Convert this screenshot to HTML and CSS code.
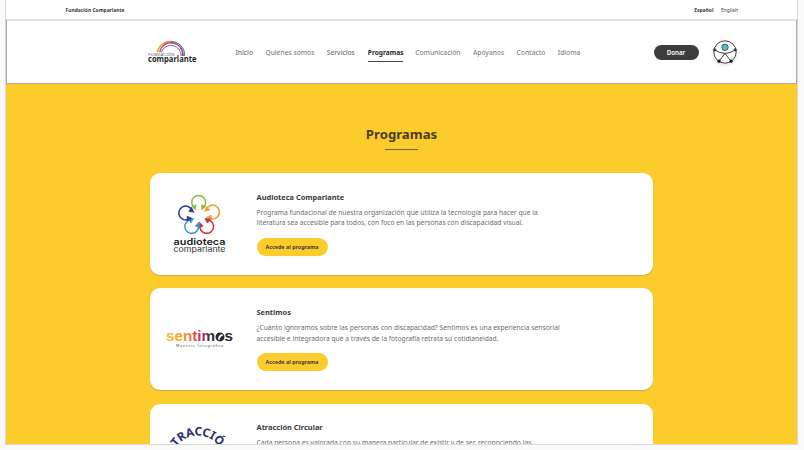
FILE: index.html
```html
<!DOCTYPE html>
<html lang="es">
<head>
<meta charset="utf-8">
<title>Fundación Comparlante</title>
<link rel="stylesheet" href="styles.css">
</head>
<body>
<div class="page">
  <div class="topbar">
    <strong class="org">Fundación Comparlante</strong>
    <div class="langs"><strong>Español</strong><span>English</span></div>
  </div>
  <header class="header">
    <svg class="brand" viewBox="0 0 52 26" aria-label="Fundación Comparlante">
      <g fill="none">
        <path d="M9.2 13.2A13.8 13.8 0 0 1 23 2.6" stroke="#f2a93b" stroke-width="1.7"/>
        <path d="M16 4.2A13.8 13.8 0 0 1 29 3.9" stroke="#ee9140" stroke-width="1"/>
        <path d="M23 2.5A13.8 13.8 0 0 1 36.7 17" stroke="#3c8fb5" stroke-width="1.1"/>
        <path d="M22 4A12.6 12.6 0 0 1 35.5 17" stroke="#4f68a5" stroke-width=".9"/>
        <path d="M11.8 13.2A11.4 11.4 0 0 1 34.3 17" stroke="#c33c71" stroke-width="1.3"/>
        <path d="M13.3 13.2A10.2 10.2 0 0 1 33.1 17" stroke="#693c91" stroke-width=".8"/>
      </g>
      <text class="brand-top" x="0.3" y="16.6" textLength="26">FUNDACIÓN</text>
      <text class="brand-name" x="0" y="23" textLength="48.5" lengthAdjust="spacingAndGlyphs">comparlante</text>
    </svg>
    <nav class="nav">
      <a>Inicio</a><a>Quiénes somos</a><a>Servicios</a><a class="active">Programas</a><a>Comunicación</a><a>Apóyanos</a><a>Contacto</a><a>Idioma</a>
    </nav>
    <a class="donate">Donar</a>
    <svg class="access" viewBox="0 0 30 30">
      <circle class="access-disc" cx="15" cy="15" r="12.4"/>
      <g fill="none" stroke="#282427" stroke-width=".9">
        <circle cx="15" cy="15" r="11.2"/>
        <path d="M4.5 12.8Q15 20 25.5 12.8M15 16.5L9 24.2M15 16.5L21 24.2"/>
      </g>
      <circle cx="15" cy="10.3" r="3.2" fill="#5fb9d9" stroke="#23445a" stroke-width=".8"/>
      <circle cx="4.8" cy="12.8" r="1.6" fill="#254b60"/><circle cx="25.2" cy="12.8" r="1.6" fill="#254b60"/>
      <circle cx="9" cy="24.2" r="1.6" fill="#161616"/><circle cx="21" cy="24.2" r="1.6" fill="#161616"/>
    </svg>
  </header>
  <main class="programs">
    <h1>Programas</h1>
    <div class="rule"></div>
    <article class="card">
      <svg class="logo" viewBox="0 0 100 102">
        <defs>
          <g id="petal"><path d="M-4.8 5A6.9 6.9 0 1 1 4.8 5" fill="none" stroke-width="1.5"/><path d="M-7 3.8L-2.7 2.4L-3.2 7.6ZM7 3.8L2.7 2.4L3.2 7.6Z" stroke-width=".7"/></g>
        </defs>
        <use href="#petal" transform="translate(48.7 29.4)" stroke="#8abb40" fill="#8abb40"/>
        <use href="#petal" transform="translate(62.6 39) rotate(72)" stroke="#f09b2d" fill="#f09b2d"/>
        <use href="#petal" transform="translate(56.7 53.5) rotate(144)" stroke="#c52d40" fill="#c52d40"/>
        <use href="#petal" transform="translate(41.7 53.5) rotate(216)" stroke="#3297cc" fill="#3297cc"/>
        <use href="#petal" transform="translate(35.7 40) rotate(288)" stroke="#33388c" fill="#33388c"/>
        <text class="audio-name" x="23.5" y="71.7" textLength="52" lengthAdjust="spacingAndGlyphs">audioteca</text>
        <text class="audio-sub" x="23.5" y="79.2" textLength="52" lengthAdjust="spacingAndGlyphs">comparlante</text>
      </svg>
      <div class="copy">
        <h2>Audioteca Comparlante</h2>
        <p>Programa fundacional de nuestra organización que utiliza la tecnología para hacer que la<br>literatura sea accesible para todos, con foco en las personas con discapacidad visual.</p>
        <a class="button">Accede al programa</a>
      </div>
    </article>
    <article class="card">
      <svg class="logo" viewBox="0 0 100 102">
        <defs><linearGradient id="warm"><stop offset="0" stop-color="#f7c32e"/><stop offset=".32" stop-color="#ef9134"/><stop offset=".48" stop-color="#d63c58"/><stop offset=".57" stop-color="#a12b68"/><stop offset=".64" stop-color="#443044"/><stop offset=".75" stop-color="#292929"/></linearGradient></defs>
        <text class="sent-name" fill="url(#warm)" x="16" y="53.2" textLength="67" lengthAdjust="spacingAndGlyphs">sentimos</text>
        <circle cx="70" cy="49" r="4.4" fill="#292929"/>
        <path d="M68.2 51.5Q67.7 47.5 71.8 45.9L73.4 47.4Q70 48.2 69.5 52.2Z" fill="#fff"/>
        <text class="sent-sub" x="26" y="58.6" textLength="47">Muestra fotográfica</text>
      </svg>
      <div class="copy">
        <h2>Sentimos</h2>
        <p>¿Cuánto ignoramos sobre las personas con discapacidad? Sentimos es una experiencia sensorial<br>accesible e integradora que a través de la fotografía retrata su cotidianeidad.</p>
        <a class="button">Accede al programa</a>
      </div>
    </article>
    <article class="card">
      <svg class="logo" viewBox="0 0 100 102">
        <defs><path id="arc" d="M22.5 66V57A25.5 25.5 0 0 1 73.5 57V66"/></defs>
        <text class="circ-name"><textPath href="#arc" startOffset="16" textLength="67">ATRACCIÓN</textPath></text>
      </svg>
      <div class="copy">
        <h2>Atracción Circular</h2>
        <p>Cada persona es valorada con su manera particular de existir y de ser, reconociendo las</p>
        <a class="button">Accede al programa</a>
      </div>
    </article>
  </main>
</div>
</body>
</html>
```
FILE: styles.css
```css
* { box-sizing: border-box; }
body {
  margin: 0;
  height: 450px;
  overflow: hidden;
  padding: 0 6px 5px 5px;
  background: #fafafa;
  font-family: "Noto Sans", sans-serif;
  color: #3c3c3c;
}
.page {
  height: 445px;
  overflow: hidden;
  border: 1px solid #d8d8d8;
  border-top: 0;
  background: #fff;
}
.topbar {
  height: 19px;
  display: flex;
  justify-content: space-between;
  align-items: center;
  padding: 0 59px 0 59.5px;
  font-size: 5px;
}
.org { font-size: 4.97px; }
.langs { display: flex; gap: 7.5px; }
.header {
  height: 65px;
  display: flex;
  align-items: center;
  padding-left: 141px;
  border: 1px solid #aaa;
  border-top: 2px solid #e4e4e4;
}
.brand { width: 52px; height: 26px; flex: none; }
.brand-top { font-size: 4px; fill: #555; }
.brand-name { font: 700 8px "Open Sans", sans-serif; fill: #252525; }
.nav {
  display: flex;
  gap: 12.4px;
  width: 383px;
  margin: 4px 0 0 35.5px;
  font-size: 6.68px;
  font-weight: 500;
  line-height: 11px;
  color: #858585;
  white-space: nowrap;
}
.nav a { height: 15px; }
.nav .active { margin: 0 -.6px 0 .6px; font-size: 6.6px; font-weight: 700; color: #292929; border-bottom: 1.5px solid #484848; }
.nav a:nth-child(1), .nav a:nth-child(3) { color: #707070; }
.donate {
  width: 45px;
  height: 15px;
  margin-left: 35px;
  border-radius: 8px;
  background: #3c3c3c;
  color: #fff;
  font-size: 6.2px;
  font-weight: 600;
  line-height: 15px;
  text-align: center;
}
.access { width: 30px; height: 30px; margin-left: 11px; }
.access-disc { fill: #fff; filter: drop-shadow(0 1px 1px #ddd); }
.programs {
  height: 380px;
  padding: 41px 144px 0;
  background: #fbcc2c;
}
h1 { margin: 0; font-size: 13.2px; line-height: 18px; text-align: center; color: #4a3d22; }
.rule { width: 33px; height: 1px; margin: 6px auto 23px; background: #75622b; }
.card {
  height: 102px;
  margin-bottom: 13.4px;
  display: flex;
  border-radius: 10px;
  background: #fff;
  box-shadow: 0 1px 1px #c9a94a;
}
.logo { width: 100px; height: 102px; flex: none; }
.copy { padding: 17.6px 0 0 6.5px; white-space: nowrap; }
h2 { margin: 0; font-size: 7.45px; line-height: 12px; }
p { margin: 5.1px 0 0; font-size: 6.73px; line-height: 10.8px; color: #6d6d6d; }
.button {
  display: block;
  width: 71px;
  height: 18px;
  margin-top: 8.8px;
  border-radius: 9px;
  background: #fbcc2c;
  font-size: 5.35px;
  font-weight: 700;
  line-height: 18px;
  text-align: center;
}
.audio-name { font: 600 9px Inter, sans-serif; fill: #202020; }
.audio-sub { font: 400 7.5px Inter, sans-serif; fill: #333; }
.sent-name { font: 700 15.5px "Liberation Sans", sans-serif; }
.sent-sub { font-size: 3.6px; fill: #555; }
.circ-name { font-size: 11.8px; font-weight: 700; fill: #2b2e6c; }
```
